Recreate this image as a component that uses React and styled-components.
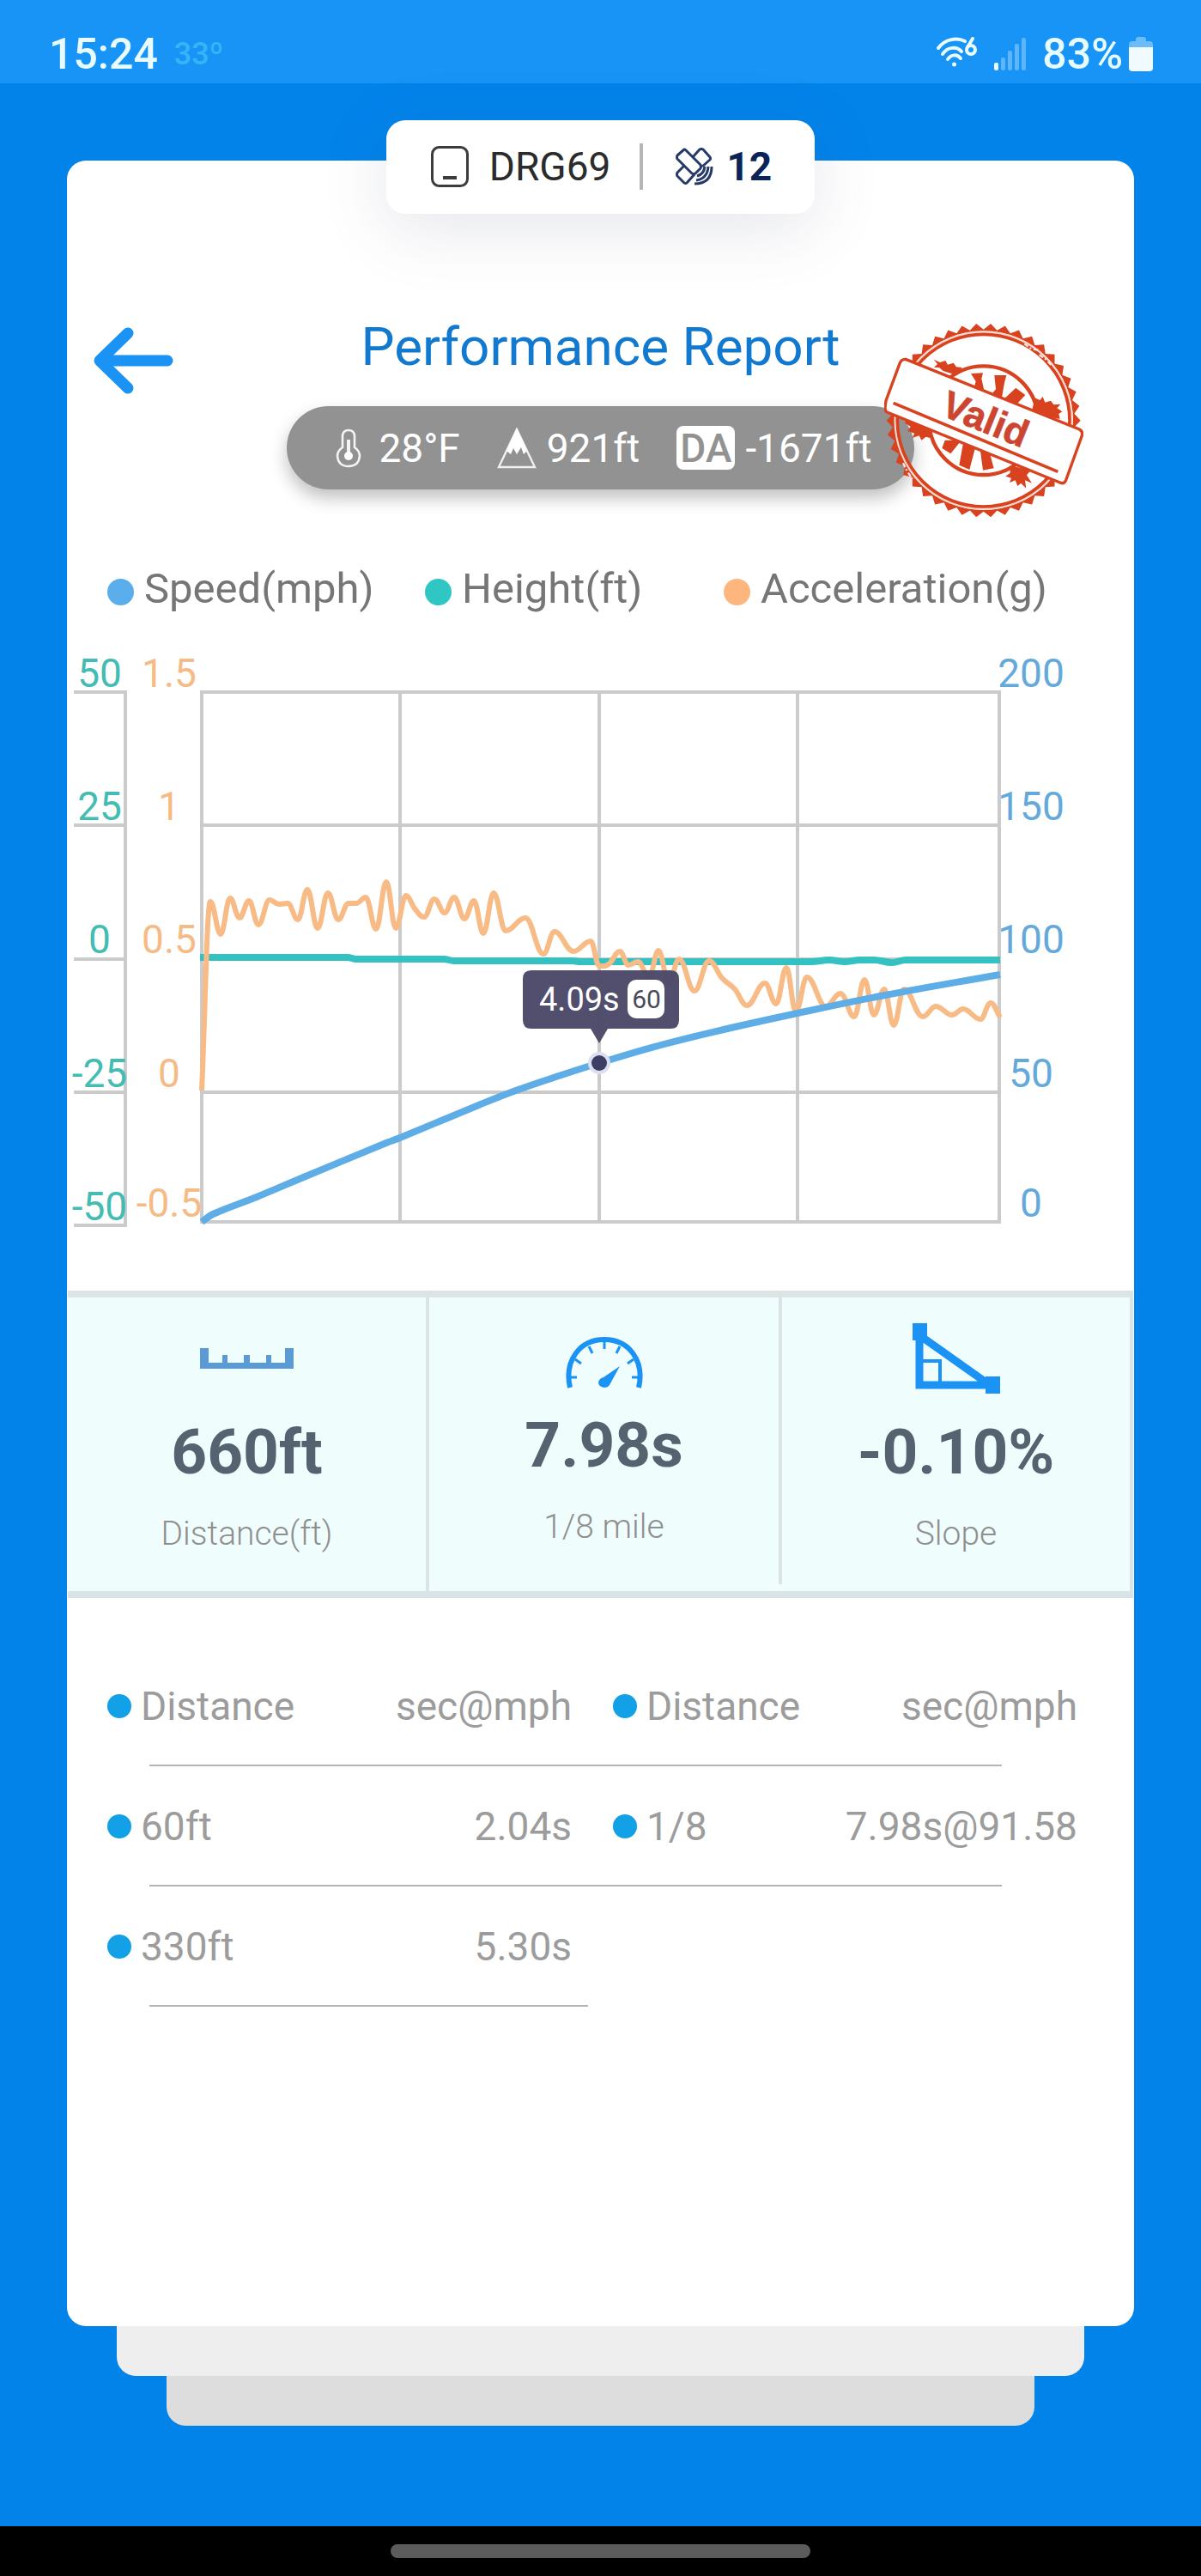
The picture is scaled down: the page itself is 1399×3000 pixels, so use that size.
import React from "react";
import styled, { createGlobalStyle } from "styled-components";

const GlobalStyle = createGlobalStyle`
  *, *::before, *::after { box-sizing: border-box; }
  body {
    margin: 0;
    background: #0283ea;
    font-family: Roboto, "Liberation Sans", sans-serif;
  }
`;

/* ---------- layout ---------- */

const Screen = styled.div`
  display: flex;
  flex-direction: column;
  min-height: 100vh;
`;

const StatusBar = styled.header`
  display: flex;
  align-items: center;
  justify-content: space-between;
  height: 97px;
  padding: 29px 56px 0 57px;
  background: #1894f7;
  color: #e8fbff;
`;

const StatusGroup = styled.div`
  display: flex;
  align-items: center;
  gap: ${(p) => p.$gap}px;
`;

const StatusText = styled.span`
  font-size: 50px;
  line-height: 56px;
  font-weight: 500;
`;

const Temperature = styled.span`
  font-size: 36px;
  line-height: 56px;
  font-weight: 500;
  color: #37b4f7;
`;

const Main = styled.main`
  flex: 1;
  display: flex;
  flex-direction: column;
  align-items: center;
  padding: 43px 78px 117px;
`;

const DeviceChip = styled.div`
  position: relative;
  z-index: 1;
  display: flex;
  align-items: center;
  height: 109px;
  padding: 0 50px 2px 52px;
  border-radius: 22px;
  background: #fff;
  box-shadow: 0 16px 80px rgba(70, 80, 110, 0.14);
  color: #2b2b2b;
  font-size: 46px;
  line-height: 54px;
`;

const DeviceName = styled.span`
  margin-left: 24px;
`;

const ChipDivider = styled.span`
  width: 4px;
  height: 54px;
  margin: 0 38px 0 34px;
  background: #b5b5b5;
`;

const SatelliteCount = styled.strong`
  margin-left: 15px;
  font-weight: 700;
  color: #0a2458;
`;

const Card = styled.article`
  align-self: stretch;
  margin-top: -62px;
  padding: 181px 0 372px;
  border-radius: 22px;
  background: #fff;
`;

const StackedSheet = styled.div`
  align-self: stretch;
  height: 58px;
  margin: 0 ${(p) => p.$inset}px;
  border-radius: 0 0 22px 22px;
  background: ${(p) => p.$color};
`;

const NavBar = styled.footer`
  display: flex;
  justify-content: center;
  align-items: center;
  height: 58px;
  background: #000;
`;

const NavHandle = styled.div`
  width: 35%;
  height: 16px;
  border-radius: 8px;
  background: #5c5c5c;
`;

/* ---------- report header ---------- */

const ReportHeader = styled.div`
  position: relative;
  display: grid;
  grid-template-columns: 1fr auto 1fr;
  align-items: start;
  padding: 0 31px;
`;

const BackButton = styled.button`
  justify-self: start;
  display: flex;
  margin: 12px 0 0;
  padding: 0;
  border: 0;
  background: none;
  cursor: pointer;
`;

const TitleColumn = styled.div`
  display: flex;
  flex-direction: column;
  align-items: center;
  gap: 33px;
`;

const Title = styled.h1`
  margin: 0;
  font-size: 62px;
  line-height: 72px;
  font-weight: 400;
  color: #1179cf;
  white-space: nowrap;
`;

const ConditionPill = styled.div`
  display: flex;
  align-items: center;
  gap: 43px;
  height: 97px;
  padding: 0 49px;
  border-radius: 49px;
  background: #929292;
  box-shadow: 0 10px 20px rgba(0, 0, 0, 0.25);
  color: #fff;
  font-size: 46px;
  line-height: 54px;
  white-space: nowrap;
`;

const Condition = styled.span`
  display: flex;
  align-items: center;
  gap: 12px;
`;

const DensityBadge = styled.span`
  width: 68px;
  height: 51px;
  border-radius: 8px;
  background: #fff;
  color: #929292;
  font-weight: 500;
  line-height: 53px;
  text-align: center;
`;

const StampHolder = styled.div`
  position: absolute;
  top: 8px;
  right: 59px;
`;

/* ---------- legend and chart ---------- */

const Legend = styled.ul`
  display: grid;
  grid-template-columns: 370fr 348fr 478fr;
  margin: 89px 0 0 47px;
  padding: 0;
  list-style: none;
`;

const LegendItem = styled.li`
  display: flex;
  align-items: center;
  gap: 12px;
  font-size: 49px;
  line-height: 54px;
  color: #767676;
`;

const Dot = styled.span`
  flex: none;
  width: ${(p) => p.$size}px;
  height: ${(p) => p.$size}px;
  margin-top: ${(p) => p.$drop || 0}px;
  border-radius: 50%;
  background: ${(p) => p.$color};
`;

const Chart = styled.svg`
  display: block;
  width: 100%;
  height: auto;
  margin-top: 32px;
  font-family: Roboto, "Liberation Sans", sans-serif;
  font-size: 46px;
`;

/* ---------- summary ---------- */

const Summary = styled.section`
  display: grid;
  grid-template-columns: 421fr 411fr 409fr;
  margin: 58px 1px 0;
  border-top: 8px solid #dce4e4;
  border-bottom: 8px solid #dae4e8;
  background: #f0fdfd;
`;

const SummaryCell = styled.div`
  display: flex;
  flex-direction: column;
  align-items: center;
  height: ${(p) => (p.$raised ? 334 : 342)}px;
  padding-top: ${(p) => (p.$raised ? 18 : 26)}px;
  border-right: 4px solid #dae4e6;
`;

const SummaryIcon = styled.div`
  display: flex;
  align-items: ${(p) => p.$align || "center"};
  height: 90px;
`;

const SummaryValue = styled.strong`
  margin-top: 20px;
  font-size: 73px;
  line-height: 88px;
  font-weight: 700;
  color: #54636f;
`;

const SummaryLabel = styled.span`
  margin-top: 27px;
  font-size: 39px;
  line-height: 48px;
  font-weight: 300;
  color: #8f8f8f;
`;

/* ---------- splits ---------- */

const SplitTable = styled.table`
  display: block;
  margin: 56px 66px 0 47px;
  color: #9c9c9c;
  font-size: 46px;
  line-height: 54px;
`;

const SplitGroup = styled.tbody`
  display: block;
`;

const SplitRow = styled.tr`
  display: grid;
  grid-template-columns: 250fr 290fr 48px 250fr 290fr;

  &::after {
    content: "";
    grid-column: 1 / -1;
    height: 2px;
    margin-top: 41px;
    margin-left: 49px;
    margin-right: ${(p) => (p.$half ? "calc(50% + 5px)" : "88px")};
    background: #b4b4b4;
  }
`;

const SplitName = styled.th`
  display: flex;
  align-items: center;
  gap: 11px;
  padding: 43px 0 0;
  font-weight: 400;
  text-align: left;

  &:nth-child(3) { grid-column: 4; }
`;

const SplitValue = styled.td`
  padding: 43px 0 0;
  font-weight: 400;
  text-align: right;
  white-space: nowrap;
`;

/* ---------- icons ---------- */

const WifiIcon = () => (
  <svg width="50" height="40" viewBox="0 0 50 40" fill="none" stroke="#e8fbff" strokeWidth="4" strokeLinecap="round">
    <path d="M3 13C10 3 24 0 34 5" />
    <path d="M8 20C14 11 25 11 30 17" />
    <path d="M14 26C18 20 25 20 29 25" />
    <circle cx="21.500" cy="32" r="2.500" fill="#e8fbff" stroke="none" />
    <path d="M43 2L37 12" />
    <circle cx="41" cy="15" r="5" />
  </svg>
);

const SignalIcon = () => (
  <svg width="38" height="40" viewBox="0 0 38 40">
    <rect x="0" y="30" width="5" height="9" rx="2" fill="#e8fbff" />
    {[24, 16, 8, 1].map((y, i) => (
      <rect key={y} x={8 + i * 8} y={y} width="5" height={39 - y} rx="2" fill="#5db6fb" />
    ))}
  </svg>
);

const BatteryIcon = () => (
  <svg width="28" height="40" viewBox="0 0 28 40">
    <path d="M8 3Q8 0 11 0H17Q20 0 20 3V5H24Q28 5 28 9V14H0V9Q0 5 4 5H8Z" fill="#6cbcf9" />
    <path d="M0 12H28V36Q28 40 24 40H4Q0 40 0 36Z" fill="#f1faff" />
  </svg>
);

const DeviceIcon = () => (
  <svg width="44" height="48" viewBox="0 0 44 48" fill="none" stroke="#3c3c3c">
    <rect x="1.500" y="1.500" width="41" height="45" rx="8" strokeWidth="3" />
    <path d="M14 37H30" strokeWidth="4" />
  </svg>
);

const SatelliteIcon = () => (
  <svg width="44" height="44" viewBox="0 0 44 44" fill="none" stroke="#253a68" strokeWidth="3" strokeLinejoin="round">
    <path d="M10 2L2 9Q1 11 2 13L19 30Q21 31 23 30L29 24Q30 22 29 20L12 3Q11 2 10 2Z" />
    <path d="M20 11L28 2Q30 1 32 2L40 11Q41 13 40 14L31 22" />
    <path d="M10 21L2 29Q1 31 2 33L10 41Q12 42 13 41L22 31" />
    <path d="M25 33Q33 31 34 22M24 38Q37 36 38 22M22 42Q42 42 42 22" />
  </svg>
);

const BackIcon = () => (
  <svg width="94" height="80" viewBox="0 0 94 80" fill="none" stroke="#1b93f5" strokeWidth="13" strokeLinecap="round" strokeLinejoin="round">
    <path d="M40 8L7 40L40 72M9 40H86" />
  </svg>
);

const ThermometerIcon = () => (
  <svg width="46" height="46" viewBox="1 0 46 46" fill="none" stroke="#f4f4f4" strokeWidth="2.600">
    <path d="M17 22V8Q18 2 24 2Q30 2 31 8V22Q37 26 37 32Q36 44 24 44Q12 44 11 32Q11 26 17 22Z" />
    <path d="M24 13V32" strokeWidth="4" />
    <circle cx="24" cy="32" r="5" fill="#fff" stroke="none" />
  </svg>
);

const MountainIcon = () => (
  <svg width="46" height="48" viewBox="0 0 46 48">
    <path d="M23 2L44 46H2Z" fill="none" stroke="#f0f0f0" strokeWidth="2.400" />
    <path d="M23 1L35 27L31 31L28 23L23 31L19 24L16 31L11 27Z" fill="#fff" />
  </svg>
);

const RulerIcon = () => (
  <svg width="109" height="24" viewBox="0 0 109 24" fill="#5b9bd5">
    <path d="M0 0H10V17H26V8H32V17H51V8H58V17H77V8H83V17H99V0H109V24H0Z" />
  </svg>
);

const GaugeIcon = () => (
  <svg width="90" height="62" viewBox="0 0 90 62" fill="none" stroke="#1b93f5">
    <path d="M5 59C-2 28 16 3 45 3S92 28 85 59" strokeWidth="6" />
    <path d="M45 6V14M27 11L31 19M63 11L59 19M11 26L18 31M79 26L72 31M5 47H13M85 47H77" strokeWidth="3" />
    <path d="M63 34L51 56Q49 59 45 59Q38 58 38 53Q39 48 44 47Z" fill="#1b93f5" stroke="none" />
  </svg>
);

const SlopeIcon = () => (
  <svg width="102" height="82" viewBox="0 0 102 82" fill="none" stroke="#1b93f5">
    <path d="M8 14V72H90Z" strokeWidth="9" />
    <path d="M8 44H32V70" strokeWidth="4" />
    <path d="M0 0H17V20H0ZM85 62H102V82H85Z" fill="#1b93f5" stroke="none" />
  </svg>
);

const TEETH = 42;
const sealOutline = Array.from({ length: TEETH * 2 }, (_, i) => {
  const angle = (Math.PI * i) / TEETH;
  const radius = i % 2 ? 318 : 339;
  return `${(377 + radius * Math.cos(angle)).toFixed(1)},${(371 + radius * Math.sin(angle)).toFixed(1)}`;
}).join("L");

const ValidStamp = () => (
  <svg width="232" height="227" viewBox="30 30 696 681" fill="#d9421f">
    <path
      d={`M${sealOutline}ZM690 371A313 313 0 1 0 64 371A313 313 0 1 0 690 371Z`}
      fillRule="evenodd"
    />
    <g fill="none" stroke="#d9421f">
      <circle cx="377" cy="371" r="309" stroke="#fbd9cc" strokeWidth="7" />
      <circle cx="377" cy="371" r="301" strokeWidth="11" />
      <circle cx="377" cy="371" r="190" strokeWidth="13" />
    </g>
    <path d="M520 103L545 122L568 124M572 142L596 158L618 182M96 520L110 548L128 575" stroke="#fbe7e0" strokeWidth="7" strokeDasharray="16 7 6 9" fill="none" />
    <path d="M333 207L375 205L370 225L380 270L345 252L350 235ZM415 213L457 213L450 240L440 296L405 280L420 262ZM490 257L523 282L486 322L442 302Z" />
    <path d="M242 440L300 440L262 487L232 468ZM306 450L347 470L328 543L292 527ZM366 478L400 490L413 538L375 545Z" />
    <path d="M203 158L225 168L244 162L252 176L272 170L282 184L302 186L282 214L262 206L236 198L222 186L204 186L216 174Z" />
    <path d="M548 330L556 292L574 300L584 288L592 308L612 302L622 316L646 314L634 328L652 340L640 348L644 366L560 350Z" />
    <path d="M100 366L124 370L200 404L190 420L204 436L176 428L160 440L152 424L128 432L136 416L112 408L122 392L104 382Z" />
    <path d="M470 528L542 545L528 562L546 590L522 580L526 608L508 590L496 600L488 580L468 588L474 572L454 566L470 554Z" />
    <path d="M105 157L712 402Q726 410 721 424L664 582Q658 594 644 588L40 342Q32 338 33 326L36 302L84 172Q90 156 105 157Z" fill="#fff" stroke="#d9421f" strokeWidth="10" />
    <path d="M62 310L637 550" stroke="#d9421f" strokeWidth="11" />
    <text x="222" y="350" transform="rotate(22 222 350)" fontFamily="Liberation Sans, Arial, sans-serif" fontWeight="700" fontSize="134" fill="#cc4530" stroke="#cc4530" strokeWidth="2">
      Valid
    </text>
  </svg>
);

/* ---------- chart data (plot coordinates) ---------- */

const acceleration = [
  [235, 1270], [245, 1050], [257, 1088], [268, 1046], [279, 1069], [290, 1049], [301, 1077], [314, 1048],
  [325, 1053], [335, 1052], [347, 1071], [358, 1036], [370, 1081], [382, 1040], [394, 1071], [406, 1052],
  [415, 1052], [426, 1045], [438, 1082], [450, 1027], [461, 1081], [473, 1043], [483, 1058], [494, 1068],
  [506, 1047], [518, 1063], [529, 1045], [541, 1070], [552, 1049], [563, 1087], [575, 1040], [589, 1084],
  [612, 1069], [633, 1111], [646, 1085], [668, 1108], [688, 1096], [698, 1125], [709, 1123], [722, 1108],
  [732, 1124], [743, 1120], [756, 1138], [767, 1107], [779, 1144], [791, 1117], [809, 1154], [826, 1119],
  [841, 1139], [856, 1152], [870, 1171], [891, 1145], [904, 1169], [916, 1127], [927, 1178], [940, 1138],
  [962, 1172], [979, 1157], [995, 1184], [1007, 1141], [1018, 1182], [1030, 1152], [1041, 1194], [1053, 1152],
  [1075, 1184], [1090, 1172], [1109, 1182], [1122, 1175], [1142, 1187], [1154, 1168], [1165, 1185],
];

const height = [
  [233, 1115], [405, 1115], [415, 1117], [517, 1117], [529, 1119], [666, 1119], [676, 1120], [945, 1120],
  [966, 1118], [984, 1120], [1002, 1118], [1018, 1118], [1039, 1121], [1055, 1118], [1165, 1118],
];

const speed = [
  [235, 1423], [248, 1414], [299, 1394], [356, 1370], [450, 1331], [466, 1325], [560, 1286], [601, 1270],
  [654, 1252], [698, 1238], [770, 1217], [843, 1199], [929, 1180], [1031, 1159], [1165, 1135],
];

/* Cubic curve that keeps every local peak and dip at its own sample. */
function smoothPath(points) {
  const slope = points.map(([x, y], i) => {
    const prev = points[i - 1];
    const next = points[i + 1];
    if (!prev || !next) return null;
    if ((y - prev[1]) * (next[1] - y) <= 0) return 0;
    return (next[1] - prev[1]) / (next[0] - prev[0]);
  });
  return points.reduce((path, [x, y], i) => {
    if (i === 0) return `M${x} ${y}`;
    const [px, py] = points[i - 1];
    const third = (x - px) / 2.5;
    const chord = (y - py) / (x - px);
    const from = slope[i - 1] ?? chord;
    const to = slope[i] ?? chord;
    return `${path}C${(px + third).toFixed(1)} ${(py + from * third).toFixed(1)} ${(x - third).toFixed(1)} ${(y - to * third).toFixed(1)} ${x} ${y}`;
  }, "");
}

const ticks = [
  { y: 800, height: "50", acceleration: "1.5", speed: "200" },
  { y: 955, height: "25", acceleration: "1", speed: "150" },
  { y: 1110, height: "0", acceleration: "0.5", speed: "100" },
  { y: 1266, height: "-25", acceleration: "0", speed: "50" },
  { y: 1417, height: "-50", acceleration: "-0.5", speed: "0" },
];

const PerformanceChart = () => (
  <Chart viewBox="78 745 1243 700" role="img" aria-label="Speed, height and acceleration over time">
    <g stroke="#cbcbcb" strokeWidth="4" fill="none">
      <path d="M86 806H146M86 961H146M86 1117H146M86 1272H146M86 1427H146M146 804V1429" />
      <path d="M235 806H1164V1423H235ZM235 961H1164M235 1117H1164M235 1272H1164M466 806V1423M698 806V1423M929 806V1423" />
    </g>
    <g textAnchor="middle">
      {ticks.map((t) => (
        <React.Fragment key={t.y}>
          <text x="116" y={t.height === "-50" ? 1421 : t.y} fill="#43bcb4">{t.height}</text>
          <text x="197" y={t.y} fill="#f5bb86">{t.acceleration}</text>
          <text x="1201" y={t.y} fill="#64a9dc">{t.speed}</text>
        </React.Fragment>
      ))}
    </g>
    <g fill="none" strokeLinejoin="round">
      <path d={smoothPath(height)} stroke="#33c1c1" strokeWidth="8" />
      <path d={smoothPath(acceleration)} stroke="#f8bb86" strokeWidth="6" />
      <path d={smoothPath(speed)} stroke="#5eade6" strokeWidth="8" />
    </g>
    <circle cx="698" cy="1238" r="13" fill="#dcdff0" />
    <circle cx="698" cy="1238" r="9" fill="#3b3f63" />
    <path d="M619 1130H781Q791 1130 791 1140V1188Q791 1198 781 1198H708L698 1215L688 1198H619Q609 1198 609 1188V1140Q609 1130 619 1130Z" fill="#4b4869" fillOpacity="0.970" />
    <text x="628" y="1177" fontSize="38" fill="#fff">4.09s</text>
    <rect x="731" y="1141" width="43" height="45" rx="10" fill="#fff" />
    <text x="753" y="1174" fontSize="30" fill="#4a4a5a" textAnchor="middle">60</text>
  </Chart>
);

/* ---------- page ---------- */

const legend = [
  { name: "Speed(mph)", color: "#5aaeec" },
  { name: "Height(ft)", color: "#2fc6c4" },
  { name: "Acceleration(g)", color: "#fdb67e" },
];

const splits = [
  [["60ft", "2.04s"], ["1/8", "7.98s@91.58"]],
  [["330ft", "5.30s"]],
];

const splitDot = <Dot $size={28} $color="#12a0e6" />;

export default function App() {
  return (
    <Screen>
      <GlobalStyle />
      <StatusBar>
        <StatusGroup $gap={19}>
          <StatusText>15:24</StatusText>
          <Temperature>33º</Temperature>
        </StatusGroup>
        <StatusGroup $gap={18}>
          <WifiIcon />
          <SignalIcon />
          <StatusGroup $gap={7}>
            <StatusText>83%</StatusText>
            <BatteryIcon />
          </StatusGroup>
        </StatusGroup>
      </StatusBar>

      <Main>
        <DeviceChip>
          <DeviceIcon />
          <DeviceName>DRG69</DeviceName>
          <ChipDivider />
          <SatelliteIcon />
          <SatelliteCount>12</SatelliteCount>
        </DeviceChip>

        <Card>
          <ReportHeader>
            <BackButton type="button" aria-label="Back">
              <BackIcon />
            </BackButton>
            <TitleColumn>
              <Title>Performance Report</Title>
              <ConditionPill>
                <Condition><ThermometerIcon />28°F</Condition>
                <Condition><MountainIcon />921ft</Condition>
                <Condition><DensityBadge>DA</DensityBadge>-1671ft</Condition>
              </ConditionPill>
            </TitleColumn>
            <StampHolder><ValidStamp /></StampHolder>
          </ReportHeader>

          <Legend>
            {legend.map((item) => (
              <LegendItem key={item.name}>
                <Dot $size={31} $drop={6} $color={item.color} />
                {item.name}
              </LegendItem>
            ))}
          </Legend>

          <PerformanceChart />

          <Summary>
            <SummaryCell>
              <SummaryIcon><RulerIcon /></SummaryIcon>
              <SummaryValue>660ft</SummaryValue>
              <SummaryLabel>Distance(ft)</SummaryLabel>
            </SummaryCell>
            <SummaryCell $raised>
              <SummaryIcon $align="flex-end"><GaugeIcon /></SummaryIcon>
              <SummaryValue>7.98s</SummaryValue>
              <SummaryLabel>1/8 mile</SummaryLabel>
            </SummaryCell>
            <SummaryCell>
              <SummaryIcon><SlopeIcon /></SummaryIcon>
              <SummaryValue>-0.10%</SummaryValue>
              <SummaryLabel>Slope</SummaryLabel>
            </SummaryCell>
          </Summary>

          <SplitTable>
            <SplitGroup>
              <SplitRow>
                <SplitName scope="col">{splitDot}Distance</SplitName>
                <SplitValue as="th" scope="col">sec@mph</SplitValue>
                <SplitName scope="col">{splitDot}Distance</SplitName>
                <SplitValue as="th" scope="col">sec@mph</SplitValue>
              </SplitRow>
              {splits.map((row) => (
                <SplitRow key={row[0][0]} $half={row.length === 1}>
                  {row.map(([name, value]) => (
                    <React.Fragment key={name}>
                      <SplitName scope="row">{splitDot}{name}</SplitName>
                      <SplitValue>{value}</SplitValue>
                    </React.Fragment>
                  ))}
                </SplitRow>
              ))}
            </SplitGroup>
          </SplitTable>
        </Card>
        <StackedSheet $inset={58} $color="#eeeeee" />
        <StackedSheet $inset={116} $color="#dddddd" />
      </Main>

      <NavBar>
        <NavHandle />
      </NavBar>
    </Screen>
  );
}
